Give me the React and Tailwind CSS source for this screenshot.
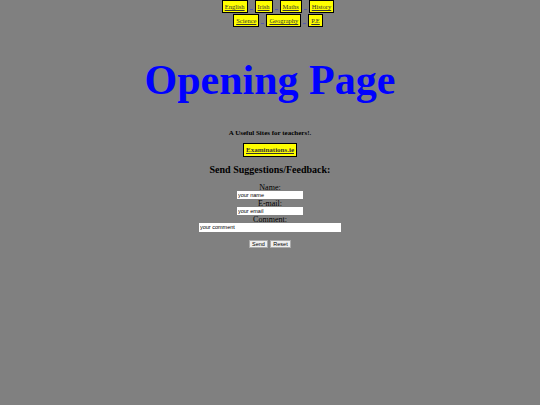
import React from 'react';

const rows = [
  ['English', 'Irish', 'Maths', 'History'],
  ['Science', 'Geography', 'P.E']
];

const serif = "font-['Liberation_Serif',serif]";

const NavButton = ({ label }) => (
  <a className="border border-black bg-[#ffff00] px-[2px] py-[1px] text-[6.5px] leading-[9px] text-[#333] underline">
    {label}
  </a>
);

const App = () => {
  return (
    <div className={`min-h-[405px] w-full bg-[#808080] ${serif} text-black`}>
      <div className="flex flex-col items-center">
        {rows.map((row, i) => (
          <div key={i} className="ml-[16px] mt-[1px] flex items-end first:mt-0">
            {row.map((label, j) => (
              <React.Fragment key={label}>
                {j > 0 && <span className="mx-[2px] mb-[3px] h-px w-[3px] bg-[#5a5aa8]" />}
                <NavButton label={label} />
              </React.Fragment>
            ))}
          </div>
        ))}

        <h1 className="mt-[32px] text-[42px] font-bold leading-none text-[#0000ff]">Opening Page</h1>

        <p className="mt-[27px] text-[7px] font-bold">A Useful Sites for teachers!.</p>

        <a className="mt-[4px] border border-black bg-[#ffff00] px-[2px] py-[2px] text-[7px] font-bold leading-[8px] text-[#333] underline">
          Examinations.ie
        </a>

        <h2 className="mt-[6px] text-[10px] font-bold leading-[13px]">Send Suggestions/Feedback:</h2>

        <form className="mt-[8px] flex flex-col items-center text-[8px] leading-[8px]">
          <label>Name:</label>
          <input
            className="mt-[-1px] h-[8px] w-[66px] bg-white px-[1px] font-['Liberation_Sans',sans-serif] text-[5.5px] text-black outline-none"
            defaultValue="your name"
          />
          <label className="mt-[1px]">E-mail:</label>
          <input
            className="mt-[-1px] h-[8px] w-[66px] bg-white px-[1px] font-['Liberation_Sans',sans-serif] text-[5.5px] text-black outline-none"
            defaultValue="your email"
          />
          <label className="mt-[1px]">Comment:</label>
          <input
            className="mt-[-1px] h-[9px] w-[142px] bg-white px-[1px] font-['Liberation_Sans',sans-serif] text-[5.5px] text-black outline-none"
            defaultValue="your comment"
          />
          <div className="mt-[8px] flex gap-[2px] font-['Liberation_Sans',sans-serif]">
            <button type="button" className="h-[8px] w-[19px] border border-[#aaa] bg-[#eee] text-[5.5px] leading-[6px]">
              Send
            </button>
            <button type="button" className="h-[8px] w-[21px] border border-[#aaa] bg-[#eee] text-[5.5px] leading-[6px]">
              Reset
            </button>
          </div>
        </form>
      </div>
    </div>
  );
};

export default App;
